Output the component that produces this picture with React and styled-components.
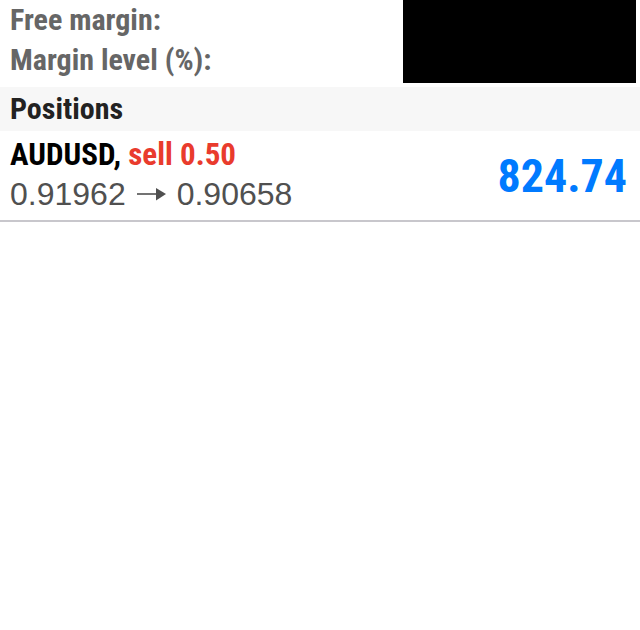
import React from 'react';
import styled, { createGlobalStyle } from 'styled-components';

const GlobalStyle = createGlobalStyle`
  body {
    margin: 0;
    background: #fff;
    font-family: 'Roboto Condensed', Roboto, sans-serif;
  }
`;

const Summary = styled.section`
  display: flex;
  justify-content: space-between;
  padding: 0 4px 4px 10px;
`;

const SummaryList = styled.dl`
  margin: 0;
`;

const SummaryLabel = styled.dt`
  color: #666;
  font-size: 30px;
  font-weight: bold;
  line-height: 40px;
`;

const HiddenValues = styled.div`
  flex: 0 0 233px;
  height: 83px;
  background: #000;
`;

const SectionTitle = styled.h2`
  margin: 0;
  padding: 0 10px;
  background: #f7f7f7;
  color: #222;
  font-size: 30px;
  line-height: 44px;
`;

const Position = styled.article`
  display: flex;
  align-items: flex-end;
  justify-content: space-between;
  padding: 4px 13px 6px 10px;
  border-bottom: 2px solid #c8c7cc;
`;

const Deal = styled.div`
  font-size: 31px;
  font-weight: bold;
  line-height: 40px;
`;

const Side = styled.span`
  color: ${({ $sell }) => ($sell ? '#e93b2d' : '#007aff')};
`;

const Prices = styled.div`
  display: flex;
  align-items: center;
  gap: 11px;
  color: #505050;
  font-family: 'Liberation Sans', Arial, sans-serif;
  font-size: 32px;
  line-height: 39px;
`;

const Profit = styled.strong`
  color: #007aff;
  font-size: 46px;
  line-height: 76px;
`;

function Arrow() {
  return (
    <svg width="29" height="14" viewBox="0 0 29 14" aria-hidden="true">
      <path d="M0 6H20" stroke="currentColor" strokeWidth="1.6" />
      <path d="M19 0L29 6L19 12.5Z" fill="currentColor" />
    </svg>
  );
}

export default function App() {
  return (
    <main>
      <GlobalStyle />
      <Summary>
        <SummaryList>
          <SummaryLabel>Free margin:</SummaryLabel>
          <SummaryLabel>Margin level (%):</SummaryLabel>
        </SummaryList>
        <HiddenValues />
      </Summary>
      <SectionTitle>Positions</SectionTitle>
      <Position>
        <div>
          <Deal>
            AUDUSD, <Side $sell>sell 0.50</Side>
          </Deal>
          <Prices>
            <span>0.91962</span>
            <Arrow />
            <span>0.90658</span>
          </Prices>
        </div>
        <Profit>824.74</Profit>
      </Position>
    </main>
  );
}
